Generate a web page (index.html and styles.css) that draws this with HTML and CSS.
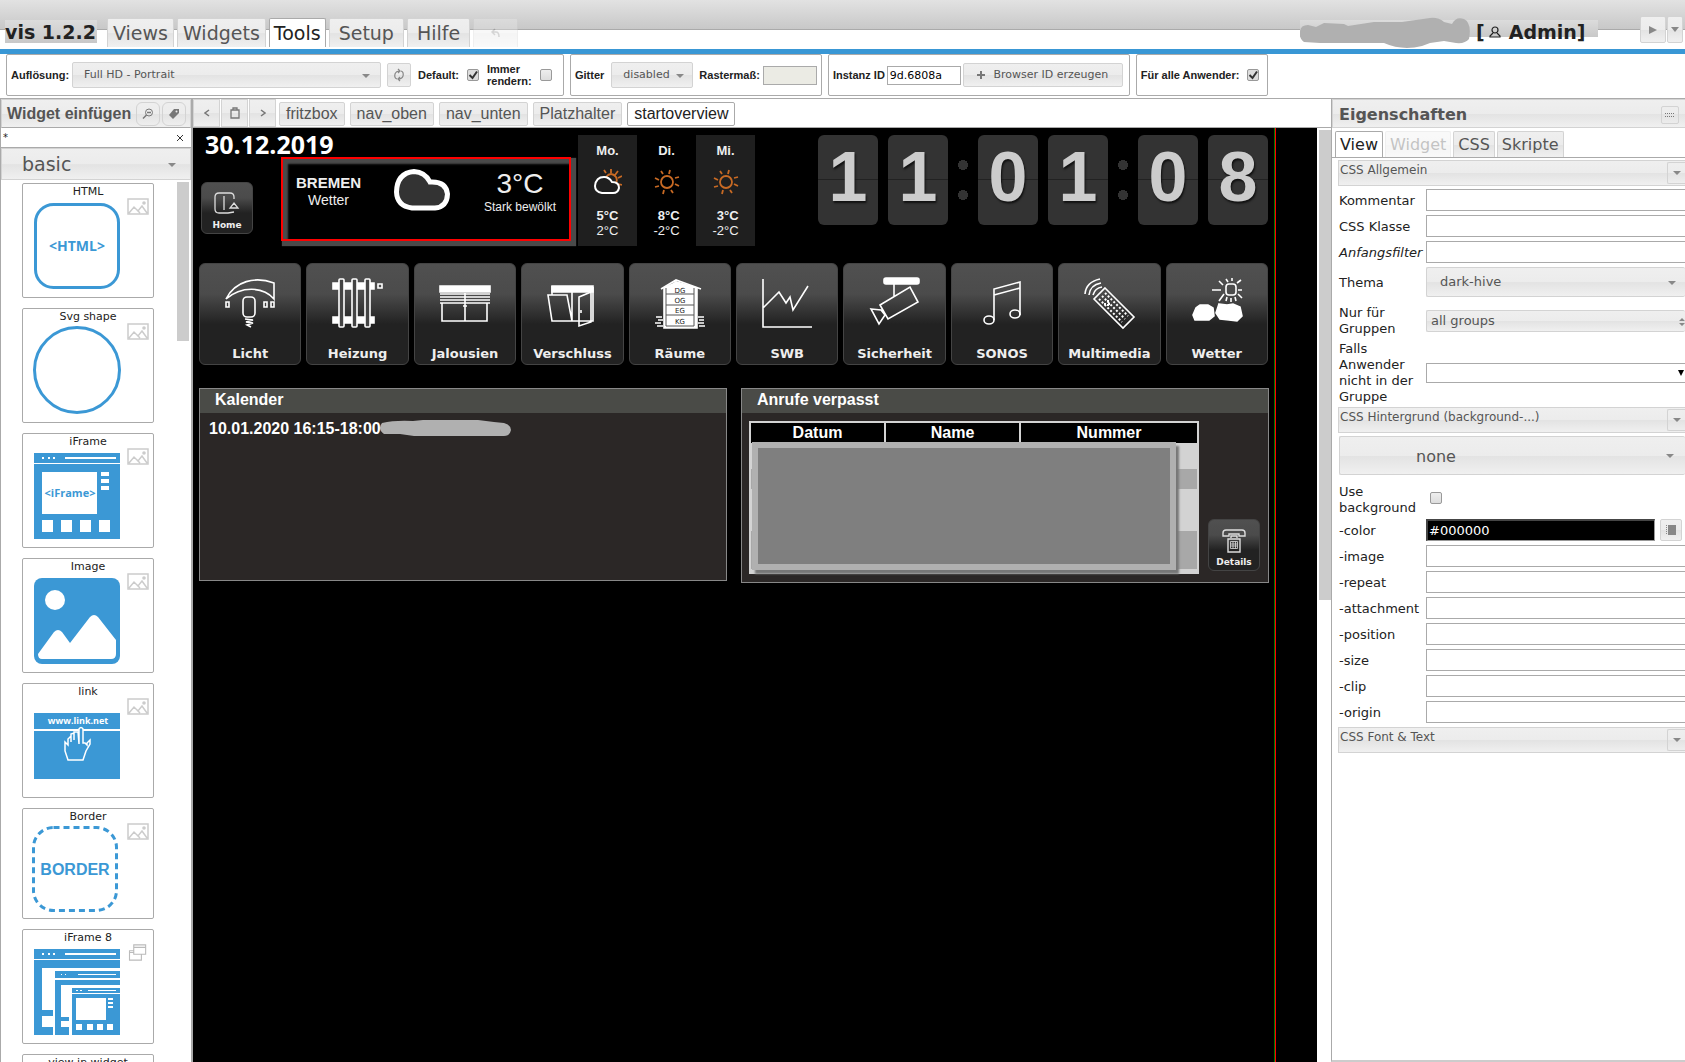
FILE: index.html
```html
<!DOCTYPE html>
<html lang="de">
<head>
<meta charset="utf-8">
<title>vis 1.2.2</title>
<link rel="stylesheet" href="styles.css">
</head>
<body>
<svg class="defs" aria-hidden="true">
  <symbol id="thumb" viewBox="0 0 22 17"><path d="M1 1h20v15H1zM2 15l5-6 4 4 4-5 5 7M10 12l3 3" fill="none" stroke="#ccc" stroke-width="1.5"/><circle cx="17" cy="5" r="1.8" fill="#ccc"/></symbol>
  <symbol id="sun" viewBox="0 0 26 26"><g fill="none" stroke="#c86a24" stroke-width="1.8"><circle cx="13" cy="13" r="6"/><path d="M16 1l-1 4M7 2l2 3M1 9l4 2M1 18l4-1M9 25l1-4M19 24l-2-3M25 17l-4-2M25 8l-4 1"/></g></symbol>
</svg>

<header class="top">
  <strong class="brand">vis 1.2.2</strong>
  <nav class="menu">
    <button>Views</button><button>Widgets</button><button class="active">Tools</button><button class="wide">Setup</button><button class="wide">Hilfe</button>
    <button class="undo" disabled aria-label="Undo"><svg width="10" height="10" viewBox="0 0 10 10"><path d="M4 1L1 4l3 3M1 4h4q3 0 3 5" fill="none" stroke="#888" stroke-width="1.5"/></svg></button>
  </nav>
  <div class="user">
    <svg class="scribble" width="170" height="32" viewBox="0 0 170 32"><path d="M0 18Q-1 8 8 8l8 2 8-4 20 1 4 2L74 5l28 0L130 1q8-1 14 4l8 2q4-8 12-5 8 4 5 20-4 5-13 4l-12-2-14 2-8 3q-20 5-38-3H20L4 25Q0 22 0 18" fill="#b0b0b0"/></svg>
    <span>[</span><svg width="12" height="12" viewBox="0 0 12 12"><path d="M6 1a2.500 2.500 0 0 1 0 6a2.500 2.500 0 0 1 0-6M4 7L1 10v1h10v-1L8 7" fill="none" stroke="#222" stroke-width="1.200"/></svg><span>Admin]</span>
  </div>
  <div class="run">
    <button aria-label="Start"><svg width="8" height="8" viewBox="0 0 8 8"><path d="M0 0l8 4-8 4z" fill="#888"/></svg></button><button class="slim" aria-label="Auswahl"><svg width="8" height="5" viewBox="0 0 8 5"><path d="M0 0h8L4 5z" fill="#888"/></svg></button>
  </div>
</header>

<section class="tools">
  <div class="group">
    <label for="res">Auflösung:</label>
    <select id="res" class="box resolution"><option>Full HD - Portrait</option></select>
    <button class="box square" aria-label="Aktualisieren"><svg width="12" height="14" viewBox="0 0 12 14"><path d="M4 11Q1 10 2 6q1-3 5-3M5 1l2 2-2 2M8 3q3 1 2 5-1 3-5 3M7 9l-2 2 2 2" fill="none" stroke="#888" stroke-width="1.200"/></svg></button>
    <label for="def">Default:</label><input id="def" type="checkbox" checked>
    <label for="imm" class="two">Immer rendern:</label><input id="imm" type="checkbox">
  </div>
  <div class="group">
    <label for="grid">Gitter</label>
    <select id="grid" class="box gridsel"><option>disabled</option></select>
    <label for="ras" class="tight">Rastermaß:</label><input id="ras" class="short" type="text" disabled>
  </div>
  <div class="group instance">
    <label for="inst">Instanz ID</label><input id="inst" type="text" value="9d.6808a">
    <button class="box create"><svg width="8" height="8" viewBox="0 0 8 8"><path d="M4 0v8M0 4h8" stroke="#777" stroke-width="2"/></svg>Browser ID erzeugen</button>
  </div>
  <div class="group">
    <label for="all">Für alle Anwender:</label><input id="all" type="checkbox" checked>
  </div>
</section>

<main>
  <aside class="palette">
    <div class="bar">
      <h2>Widget einfügen</h2>
      <button aria-label="Suche"><svg width="12" height="12" viewBox="0 0 12 12"><circle cx="7" cy="4.500" r="3.500" fill="none" stroke="#777"/><path d="M5 4.500h4M4.500 7L1 10.500" stroke="#777" stroke-width="1.500"/></svg></button>
      <button aria-label="Tags"><svg width="12" height="12" viewBox="0 0 12 12"><path d="M1 7l5-6h5v4L5 11z" fill="#777"/><circle cx="8.500" cy="3.500" r="1" fill="#eee"/></svg></button>
    </div>
    <div class="filter"><input type="text" value="*" aria-label="Filter"><button aria-label="Leeren"><svg width="8" height="8" viewBox="0 0 8 8"><path d="M1 1l6 6M7 1L1 7" stroke="#333"/></svg></button></div>
    <select class="set" aria-label="Widgetset"><option>basic</option></select>
    <div class="list">
      <div class="cards">
        <article><h3>HTML</h3><div class="pic"><svg class="art" viewBox="0 0 86 86"><rect x="1.500" y="1.500" width="83" height="83" rx="18" fill="none" stroke="#3b98d5" stroke-width="3"/><text x="43" y="48" text-anchor="middle" class="t-html">&lt;HTML&gt;</text></svg><svg class="th"><use href="#thumb"/></svg></div></article>
        <article><h3>Svg shape</h3><div class="pic"><svg class="art" viewBox="0 0 86 86"><circle cx="43" cy="42" r="42.500" fill="none" stroke="#3b98d5" stroke-width="3"/></svg><svg class="th"><use href="#thumb"/></svg></div></article>
        <article><h3>iFrame</h3><div class="pic"><svg class="art" viewBox="0 0 86 86"><path d="M0 0h86v10H0zM0 11h86v75H0z" fill="#3b98d5"/><path d="M8 4h2v2H8zM14 4h2v2h-2zM19 4h2v2h-2zM31 4h51v2H31zM8 19h55v42H8zM67 19h8v4h-8zM67 26h8v4h-8zM67 33h8v4h-8zM8 67h11v12H8zM27 67h11v12H27zM46 67h11v12H46zM65 67h11v12H65z" fill="#fff"/><text x="36" y="44" text-anchor="middle" class="t-frame">&lt;iFrame&gt;</text></svg><svg class="th"><use href="#thumb"/></svg></div></article>
        <article><h3>Image</h3><div class="pic"><svg class="art" viewBox="0 0 86 86"><rect width="86" height="86" rx="8" fill="#3b98d5"/><circle cx="21" cy="22" r="10" fill="#fff"/><path d="M4 76L20 54q4-4 8 0l8 11 20-26q4-4 8 0l18 23v14q0 5-5 5H8q-4 0-4-5" fill="#fff"/></svg><svg class="th"><use href="#thumb"/></svg></div></article>
        <article><h3>link</h3><div class="pic"><svg class="art" viewBox="0 0 86 86"><path d="M0 10h86v16H0zM0 28h86v48H0z" fill="#3b98d5"/><text x="44" y="21" text-anchor="middle" class="t-link">www.link.net</text><path d="M45 41V26q2-3 4 0v14h2l2 2v-2l3-3v4l-4 7-1 3-2 6H34l-3-9v-9l3 3v-6l3-3v6-8l3-1v7-8h4z" fill="#3b98d5" stroke="#fff" stroke-width="1.500"/></svg><svg class="th"><use href="#thumb"/></svg></div></article>
        <article class="border"><h3>Border</h3><div class="pic"><svg class="art" viewBox="0 0 86 86"><rect x="1.500" y="1.500" width="83" height="83" rx="20" fill="none" stroke="#3b98d5" stroke-width="3" stroke-dasharray="6 4"/><text x="43" y="49" text-anchor="middle" class="t-border">BORDER</text></svg><svg class="th"><use href="#thumb"/></svg></div></article>
        <article><h3>iFrame 8</h3><div class="pic"><svg class="art" viewBox="0 0 86 86"><path d="M0 0h86v10H0zM0 11h86v8H8v42h11v6H8v11h11v8H0zM21 22h65v7H21zM21 31h65v5H27v32h8v4h-8v6h8v8H21zM38 39h48v5H38zM38 45h48v41H38z" fill="#3b98d5"/><path d="M8 4h2v2H8zM14 4h2v2h-2zM19 4h2v2h-2zM31 4h51v2H31zM27 25h1v1h-1zM31 25h1v1h-1zM44 25h38v1H44zM54 41h28v1H54zM42 41h2v1h-2zM46 41h2v1h-2zM42 49h30v22H42zM74 49h5v2h-5zM74 53h5v2h-5zM74 57h5v2h-5zM42 75h6v6h-6zM53 75h6v6h-6zM63 75h6v6h-6zM73 75h6v6h-6z" fill="#fff"/></svg><svg class="th" viewBox="0 0 22 20"><path d="M6 1h14v11H6zM6 4h14M6 8H1v11h14v-7M1 10h5" fill="none" stroke="#bbb" stroke-width="1.300"/></svg></div></article>
        <article><h3>view in widget</h3></article>
      </div>
      <div class="thumbbar"></div>
    </div>
  </aside>

  <section class="stage">
    <nav class="views">
      <button class="nav" aria-label="Zurück"><svg width="6" height="8" viewBox="0 0 6 8"><path d="M5 1L1 4l4 3" fill="none" stroke="#777" stroke-width="1.500"/></svg></button><button class="nav" aria-label="Zwischenablage"><svg width="10" height="12" viewBox="0 0 10 12"><path d="M1 3h8v8H1zM3 3V1h4v2" fill="none" stroke="#777" stroke-width="1.300"/></svg></button><button class="nav" aria-label="Weiter"><svg width="6" height="8" viewBox="0 0 6 8"><path d="M1 1l4 3-4 3" fill="none" stroke="#777" stroke-width="1.500"/></svg></button>
      <button>fritzbox</button><button>nav_oben</button><button>nav_unten</button><button>Platzhalter</button><button class="active">startoverview</button>
    </nav>
    <div class="scroller">
      <div class="canvas">
        <div class="view">
          <div class="head">
            <div class="left">
              <div class="date">30.12.2019</div>
              <div class="now">
                <button class="mini"><svg width="26" height="24" viewBox="0 0 26 24"><path d="M20 7V5q0-4-4-4H5Q1 1 1 5v12q0 4 4 4h9l6-1M10 4v14M16 16h8l-4-5z" fill="none" stroke="#ddd" stroke-width="1.300"/></svg>Home</button>
                <div class="weather">
                  <div><b class="city">BREMEN</b><span>Wetter</span></div>
                  <svg width="56" height="42" viewBox="0 0 56 42"><path d="M18 39Q3 37 2.500 23Q3 4 20 2.500Q31 3 36 13Q52 12 53.500 25Q53 38 41 39z" fill="#333" stroke="#fff" stroke-width="5"/></svg>
                  <div><span class="temp">3°C</span><span class="cond">Stark bewölkt</span></div>
                </div>
              </div>
            </div>
            <div class="forecast">
              <div class="day"><b>Mo.</b><svg width="28" height="26" viewBox="0 0 28 26"><g fill="none" stroke="#c86a24" stroke-width="1.800"><path d="M12 8q5-6 10 0 2 4-1 8M17 0v4M10 1l2 3M24 2l-3 4M28 7l-4 2M28 16l-4-1"/></g><path d="M8 24Q1 23 1 17q1-9 9-9 5 0 8 5 7 0 7 6-1 5-6 5z" fill="#1f1f1f" stroke="#fff" stroke-width="2"/></svg><p><b>5°C</b><br>2°C</p></div>
              <div class="day"><b>Di.</b><svg width="26" height="26"><use href="#sun"/></svg><p><b>8°C</b><br>-2°C</p></div>
              <div class="day"><b>Mi.</b><svg width="26" height="26"><use href="#sun"/></svg><p><b>3°C</b><br>-2°C</p></div>
            </div>
            <div class="clock"><span>1</span><span>1</span><i></i><span>0</span><span>1</span><i></i><span>0</span><span>8</span></div>
          </div>

          <div class="tiles">
            <button><svg viewBox="0 0 50 50"><path d="M1 21C10 3 30-2 49 5v16C38 8 16 8 1 21zM1 24h3v5H1zM39 24h3v5h-3zM46 24h3v5h-3z"/><rect x="18" y="19" width="12" height="20" rx="4"/><path d="M20 41l8 1-7 2 7 1-6 2 4 2"/></svg>Licht</button>
            <button><svg viewBox="0 0 50 50"><path class="f" d="M0 5h41v6H0zM0 39h41v6H0z"/><g class="d"><rect x="6" y="1" width="5" height="48" rx="1"/><rect x="19" y="1" width="5" height="48" rx="1"/><rect x="32" y="1" width="5" height="48" rx="1"/></g><path d="M45 6h4v4h-4z"/></svg>Heizung</button>
            <button><svg viewBox="0 0 50 50"><path class="f" d="M0 8h50v6H0z"/><path d="M0 16h50M0 19h50M0 22h50M0 25h50M2 25v18h45V25M25 15v28M23 28h4"/></svg>Jalousien</button>
            <button><svg viewBox="0 0 50 50"><path class="f" d="M5 8h41v6H5z"/><path d="M5 8v9M5 43h41V9M25 12v31M1 17h19l5 26H5zM32 19l12-5v30l-12 4zM34 32v3"/></svg>Verschluss</button>
            <button><svg viewBox="0 0 50 50"><path d="M6 11L21 2l25 9M18 4h4"/><path class="f" d="M9 10L22 4l20 6v40H9z"/><path d="M1 39h6M3 42h5M0 45h6M2 48h6M43 39h6M44 42h5M43 45h6M44 48h6"/><path d="M11 16h28M11 27h28M11 37h28M11 48h28M11 10v38M39 10v38" class="k"/><g class="fl"><text x="25" y="15">DG</text><text x="25" y="25">OG</text><text x="25" y="35">EG</text><text x="25" y="46">KG</text></g></svg>Räume</button>
            <button><svg viewBox="0 0 50 50"><path d="M1 1v48h49M1 30l16-16 7 11 4-6 3 13L46 8"/></svg>SWB</button>
            <button><svg viewBox="0 0 50 50"><rect class="f" x="14" width="35" height="6" rx="2"/><path d="M24 6v13M10 27L40 9l8 15-30 17zM1 31l10 1 4 5-6 9z"/></svg>Sicherheit</button>
            <button><svg viewBox="0 0 50 50"><path d="M17 42V11l26-7v33M17 17l26-7"/><ellipse cx="12" cy="42" rx="5" ry="4"/><ellipse cx="38" cy="36" rx="5" ry="4"/></svg>SONOS</button>
            <button><svg viewBox="0 0 50 50"><path d="M21 10l29 29-11 11-29-29zM1 16Q2 4 16 1M5 17Q6 7 17 5M9 17q2-7 9-8"/><path class="dots" d="M21 15l23 23M18 18l23 23M15 21l23 23M20 26h8M24 22v8"/></svg>Multimedia</button>
            <button><svg viewBox="0 0 50 50"><rect x="34" y="6" width="10" height="11" rx="3"/><path d="M20 12h9M34 1l2 3M27 3l4 4M40 0v3M45 5l4-3M46 12h4M46 16l4 4M27 23l5-7M34 23l1-4M39 24v-4M44 23l-1-4"/><path class="f" d="M4 30l4-3h8l5 3 1 8-5 4H3l-2-5zM27 26l8 1 6-1 7 3 2 9-5 5-8-1-9-1-4-6z"/></svg>Wetter</button>
          </div>

          <div class="panels">
            <section class="panel"><h2>Kalender</h2><p class="entry">10.01.2020 16:15-18:00<svg width="132" height="16" viewBox="0 0 132 16"><path d="M3 3Q16 0 34 1L44 0h55l16 2 10 1q7 2 7 7-1 6-7 6H35L21 14H5Q-2 9 3 3" fill="#b0b0b0"/></svg></p></section>
            <section class="panel calls"><h2>Anrufe verpasst</h2>
              <div class="callbody">
                <div class="calltable">
                  <table><thead><tr><th class="c1">Datum</th><th class="c1">Name</th><th>Nummer</th></tr></thead>
                  <tbody><tr class="r1"><td colspan="3"></td></tr><tr class="r2 odd"><td colspan="3"></td></tr><tr class="r3"><td colspan="3"></td></tr><tr class="r4 odd"><td colspan="3"></td></tr></tbody></table>
                  <div class="cover"></div>
                </div>
                <button class="mini"><svg width="26" height="26" viewBox="0 0 26 26"><path d="M2 8V5q0-3 3-3h16q3 0 3 3v3h-6V6H8v2zM10 10V8h6v2M7 11h12v13H7z" fill="none" stroke="#ddd" stroke-width="1.400"/><path d="M9.500 13.500h7v7h-7zM9.500 16h7M9.500 18h7M12 13.500v7M14.500 13.500v7" fill="none" stroke="#ddd" stroke-width=".8"/></svg>Details</button>
              </div>
            </section>
          </div>
        </div>
      </div>
      <div class="rail"></div>
    </div>
  </section>

  <aside class="props">
    <div class="bar"><h2>Eigenschaften</h2><button aria-label="Ansicht"><svg width="10" height="4" viewBox="0 0 10 4"><path d="M0 .5h10M0 3.500h10" stroke="#777" stroke-dasharray="1 1"/></svg></button></div>
    <nav class="tabs"><button class="active">View</button><button disabled>Widget</button><button>CSS</button><button>Skripte</button></nav>
    <div class="fields">
      <h3>CSS Allgemein<button aria-label="Einklappen"><svg width="8" height="4" viewBox="0 0 8 4"><path d="M0 0h8L4 4z" fill="#888"/></svg></button></h3>
      <div class="row"><label for="p1">Kommentar</label><input id="p1" type="text"></div>
      <div class="row"><label for="p2">CSS Klasse</label><input id="p2" type="text"></div>
      <div class="row"><label for="p3"><em>Anfangsfilter</em></label><input id="p3" type="text"></div>
      <div class="row theme"><label for="p4">Thema</label><select id="p4" class="box"><option>dark-hive</option></select></div>
      <div class="row groups"><label for="p5">Nur für Gruppen</label><select id="p5" class="box updown"><option>all groups</option></select></div>
      <div class="row else"><label for="p6">Falls Anwender nicht in der Gruppe</label><select id="p6" class="plain"><option></option></select></div>
      <h3>CSS Hintergrund (background-...)<button aria-label="Einklappen"><svg width="8" height="4" viewBox="0 0 8 4"><path d="M0 0h8L4 4z" fill="#888"/></svg></button></h3>
      <select class="box none" aria-label="Hintergrund"><option>none</option></select>
      <div class="row use"><label for="p7">Use background</label><input id="p7" type="checkbox"></div>
      <div class="row"><label for="p8">-color</label><input id="p8" class="color" type="text" value="#000000"><button class="box pick" aria-label="Farbe wählen"><svg width="10" height="10" viewBox="0 0 10 10"><path d="M2 0h8v10H2z" fill="#888"/><path d="M.5 0v10" stroke="#888" stroke-dasharray="1 1"/></svg></button></div>
      <div class="row"><label for="p9">-image</label><input id="p9" type="text"></div>
      <div class="row"><label for="p10">-repeat</label><input id="p10" type="text"></div>
      <div class="row"><label for="p11">-attachment</label><input id="p11" type="text"></div>
      <div class="row"><label for="p12">-position</label><input id="p12" type="text"></div>
      <div class="row"><label for="p13">-size</label><input id="p13" type="text"></div>
      <div class="row"><label for="p14">-clip</label><input id="p14" type="text"></div>
      <div class="row"><label for="p15">-origin</label><input id="p15" type="text"></div>
      <h3>CSS Font &amp; Text<button aria-label="Einklappen"><svg width="8" height="4" viewBox="0 0 8 4"><path d="M0 0h8L4 4z" fill="#888"/></svg></button></h3>
    </div>
  </aside>
</main>
</body>
</html>
```
FILE: styles.css
```css
:root {
  --ui: "DejaVu Sans", Verdana, sans-serif;
  --arial: "Liberation Sans", Arial, sans-serif;
  --gloss: linear-gradient(#efefef 0, #ececec 50%, #e3e3e3 52%, #f0f0f0 100%);
  --tri: url("data:image/svg+xml,%3Csvg xmlns='http://www.w3.org/2000/svg' width='8' height='4'%3E%3Cpath d='M0 0h8L4 4z' fill='%23888'/%3E%3C/svg%3E");
}
* { box-sizing: border-box; }
body {
  margin: 0; height: 100vh; overflow: hidden; background: #fff; color: #222;
  display: flex; flex-direction: column; font-family: var(--ui); font-size: 13px;
}
h2, h3, p { margin: 0; }
button, input, select { font: inherit; color: inherit; margin: 0; border-radius: 0; }
button { padding: 0; background: none; border: 0; display: flex; align-items: center; justify-content: center; }
select { appearance: none; }
svg { flex: none; }
.defs { display: none; }

/* header */
.top {
  display: flex; align-items: flex-start; height: 54px; flex: none; padding: 18px 2px 0 5px;
  border-bottom: 5px solid #3997d5; font-size: 19px;
  background: linear-gradient(#e2e2e2, #c8c8c8) 0 0 / 100% 29px no-repeat, linear-gradient(#aaa, #aaa) 0 29px / 100% 1px no-repeat;
}
.brand { width: 92px; height: 23px; margin-top: 2px; line-height: 25px; background: linear-gradient(#dcdcdc, #c8c8c8); white-space: nowrap; }
.menu { display: flex; gap: 3px; margin-left: 10px; }
.menu button { height: 29px; padding: 0 5px; background: var(--gloss); border: 1px solid #d3d3d3; border-bottom: 0; border-radius: 2px 2px 0 0; color: #555; }
.menu .active { background: #fff; border-color: #aaa; color: #222; padding: 0 4px; }
.menu .wide { padding: 0 9px; }
.menu .undo { width: 45px; opacity: .35; }
.user {
  display: flex; align-items: flex-start; margin: 2px 42px 0 auto; width: 298px; height: 17px; gap: 4px;
  font-weight: bold; line-height: 24px; background: linear-gradient(#dcdcdc, #c8c8c8);
}
.user svg + span { margin-left: 4px; }
.user > svg { margin-top: 6px; }
.user .scribble { margin-top: -3px; }
.user .scribble + span { margin-left: 2px; }
.run { display: flex; gap: 1px; }
.run button { width: 26px; height: 27px; margin-top: -2px; border: 1px solid #d3d3d3; background: var(--gloss); border-radius: 2px; }
.run .slim { width: 16px; }

/* toolbar */
.tools { display: flex; flex: none; gap: 6px; padding: 0 6px 2px; height: 45px; border-bottom: 1px solid #aaa; font: bold 11px/12px var(--arial); }
.group { display: flex; align-items: center; border: 1px solid #aaa; border-radius: 2px; padding: 0 11px 0 4px; }
.group:nth-child(2) { padding-right: 4px; }
.group:nth-child(4) { padding-right: 8px; }
.group.instance { padding-right: 6px; }
.box { border: 1px solid #d3d3d3; border-radius: 2px; background: var(--gloss); color: #555; font-family: var(--ui); font-weight: normal; }
select.box, select.set { background: var(--tri) no-repeat, var(--gloss); }
.resolution, .gridsel { height: 26px; padding: 0 11px; margin-left: 3px; }
.group .resolution { width: 309px; background-position: right 10px top 11px, 0 0; }
.group .gridsel { width: 82px; margin: 0 6px 0 7px; background-position: right 8px top 11px, 0 0; }
.square { width: 24px; height: 24px; margin: 0 7px 0 6px; }
.two { width: 45px; margin: 0 8px; }
input[type=checkbox] {
  appearance: none; width: 12px; height: 12px; border: 1px solid #999; border-radius: 2px; flex: none;
  background: linear-gradient(#eee, #ddd);
}
.group > label:not(.two) + input[type=checkbox] { margin-left: 8px; }
input[type=checkbox]:checked { background: url("data:image/svg+xml,%3Csvg xmlns='http://www.w3.org/2000/svg' width='10' height='10'%3E%3Cpath d='M1.5 5l3 3L9 1.500' fill='none' stroke='%23333' stroke-width='2'/%3E%3C/svg%3E") #ddd; }
.group input[type=text] { width: 74px; height: 19px; border: 1px solid #aaa; padding: 0 2px; margin-left: 2px; font: 11px var(--ui); color: #000; }
.group input.short[type=text] { width: 54px; margin-left: 3px; background: #ebebe4; }
.create { width: 160px; height: 24px; margin-left: 2px; gap: 8px; font-size: 11px; }

main { flex: 1; min-height: 0; display: grid; grid-template-columns: 193px minmax(0, 1fr) 354px; }
.bar { display: flex; align-items: center; height: 29px; border: 1px solid #d3d3d3; border-bottom-color: #aaa; background: var(--gloss); color: #555; }
.bar h2 { font-size: 16px; }

/* widget palette */
.palette { display: flex; flex-direction: column; min-height: 0; border: solid #aaa; border-width: 0 2px 0 1px; }
.palette .bar { gap: 2px; padding-left: 5px; }
.palette h2 { font-family: var(--arial); width: 127px; white-space: nowrap; }
.palette .bar button { width: 24px; height: 24px; border: 1px solid #d3d3d3; border-radius: 6px; }
.filter { display: flex; height: 20px; border-bottom: 1px solid #aaa; }
.filter input { flex: 1; min-width: 0; border: 0; padding: 0 2px; font-size: 10px; outline: 0; }
.filter button { width: 22px; }
.set { height: 32px; flex: none; border: 1px solid #d3d3d3; padding: 0 20px; font-size: 19px; color: #555; }
select.set { background-position: right 14px top 14px, 0 0; }
.list { display: flex; flex: 1; min-height: 0; overflow: hidden; padding: 2px 2px 0 21px; }
.cards { display: flex; flex-direction: column; gap: 10px; width: 132px; padding-top: 1px; }
.cards article { flex: none; height: 115px; border: 1px solid #aaa; border-radius: 2px; }
.cards .border { height: 111px; }
.cards h3 { font-size: 11px; font-weight: normal; text-align: center; height: 14px; line-height: 16px; }
.pic { display: flex; gap: 7px; padding: 0 0 0 11px; }
.art { width: 86px; height: 86px; margin-top: 5px; overflow: visible; }
.border .art { margin: 3px 2px 0 -2px; }
.th { width: 22px; height: 17px; }
.t-html, .t-frame, .t-border { font: bold 14px "Open Sans", sans-serif; fill: #3b98d5; }
.t-frame { font-size: 11px; }
.t-border { font: bold 16px var(--arial); }
.t-link { font: bold 9px "Open Sans", sans-serif; fill: #fff; }
.thumbbar { width: 12px; height: 159px; margin-left: auto; background: #ccc; }

/* view tabs */
.stage { display: flex; flex-direction: column; min-width: 0; min-height: 0; }
.views { display: flex; gap: 5px; height: 29px; flex: none; border-bottom: 1px solid #aaa; align-items: flex-end; font: 16px var(--arial); }
.views button { height: 24px; padding: 0 6px; margin-bottom: 1px; border: 1px solid #d3d3d3; border-radius: 2px; background: var(--gloss); color: #555; }
.views .nav { width: 27px; height: 28px; margin: 0 -4px 0 0; border-radius: 0; }
.views .nav + button:not(.nav) { margin-left: 2px; }
.views .active { background: #fff; border-color: #aaa; color: #222; }
.scroller { display: flex; flex: 1; min-height: 0; }
.canvas { flex: 1; min-width: 0; background: #000; color: #eee; padding-right: 41px; }
.view { height: 100%; padding: 0 6px; border-right: 1px solid #f00; box-shadow: inset -1px 0 #070; }
.rail { width: 14px; margin-top: 2px; background: linear-gradient(#ccc, #ccc) 2px 0 / 12px 470px no-repeat; }

/* dashboard */
.head { display: flex; height: 118px; font-family: var(--arial); }
.date { height: 29px; padding-left: 6px; font: bold 25px/32px "Open Sans", sans-serif; color: #fff; }
.now { display: flex; gap: 28px; padding-left: 2px; }
.mini, .tiles button {
  flex-direction: column; border: 1px solid #444; border-radius: 6px; color: #eee; font-weight: bold; font-family: var(--ui);
  background: linear-gradient(#505050 0, #4b4b4b 30%, #222 60%, #222 100%);
}
.mini { width: 52px; height: 52px; flex: none; font-size: 9px; justify-content: flex-end; gap: 4px; padding-bottom: 3px; }
.now .mini { margin-top: 25px; }
.weather {
  width: 290px; height: 84px; border: 2px solid #f00; display: flex; align-items: flex-start; justify-content: space-between;
  padding: 10px 13px; text-align: center; font-size: 14px; line-height: 16px;
  box-shadow: inset 5px 5px 2px #4a4a4a, 3px 3px 1px 2px #4a4a4a;
}
.weather span, .weather b { display: block; }
.weather .city { font-size: 15px; line-height: 18px; margin-top: 5px; }
.weather .temp { font-size: 28px; line-height: 30px; }
.weather .cond { font-size: 12px; }
.forecast { display: flex; margin: 7px 0 0 7px; font-size: 13px; }
.day { width: 59px; display: flex; flex-direction: column; align-items: center; padding-top: 8px; line-height: 15px; }
.day:nth-child(odd) { background: #1f1f1f; }
.day svg { margin: 11px 0 13px; }
.day p { text-align: right; }
.clock { display: flex; gap: 10px; margin: 7px 1px 0 auto; }
.clock span {
  width: 60px; height: 90px; border-radius: 6px; text-align: center; color: #ccc; font: bold 70px/84px var(--arial); text-shadow: 1px 2px 2px #111;
  background: linear-gradient(#222, #222) 0 44px / 100% 1px no-repeat #333;
}
.clock i { width: 10px; height: 90px; background: radial-gradient(circle, #333 5px, transparent 5px) 0 25px / 10px 10px no-repeat, radial-gradient(circle, #333 5px, transparent 5px) 0 55px / 10px 10px no-repeat; }
.tiles { display: grid; grid-template-columns: repeat(10, minmax(0, 1fr)); gap: 5px; margin: 17px 1px 0 0; }
.tiles button { height: 102px; font-size: 13px; justify-content: flex-end; gap: 18px; padding-bottom: 3px; line-height: 15px; }
.tiles svg { width: 50px; height: 50px; fill: none; stroke: #fff; stroke-width: 1.6; overflow: visible; }
.tiles .f { fill: #fff; }
.tiles .d { fill: #444; }
.tiles .k { stroke: #555; stroke-width: 1; }
.tiles .dots { stroke-width: 2; stroke-dasharray: 2 2; }
.fl { font: 7px var(--ui); fill: #222; stroke: none; text-anchor: middle; }
.panels { display: grid; grid-template-columns: 1fr 1fr; gap: 14px; align-items: start; margin-top: 23px; font: bold 16px var(--arial); color: #fff; }
.panel { border: 1px solid #888; background: #2b2726; height: 193px; }
.panel.calls { height: 195px; }
.panel h2 { font-size: 16px; line-height: 22px; height: 24px; padding-left: 15px; background: #4a4b47; }
.entry { display: flex; padding: 7px 9px; line-height: 18px; }
.entry svg { margin-left: -2px; }
.callbody { display: flex; justify-content: space-between; align-items: flex-end; padding: 8px 8px 0 7px; }
.calltable { display: grid; flex: none; width: 450px; background: #d3d3d3; height: 153px; }
.calltable > * { grid-area: 1 / 1; }
.calltable table { width: 100%; border-spacing: 2px 0; padding-top: 2px; table-layout: fixed; align-self: start; }
.calltable th { background: #000; height: 20px; padding: 0; line-height: 20px; }
.calltable .c1 { width: 133px; }
.calltable td { padding: 0; }
.odd td { background: #a8a8a8; }
.r1 { height: 26px; } .r2 { height: 20px; } .r3 { height: 42px; } .r4 { height: 38px; }
.cover { margin: 21px 23px 4px 3px; border: 6px solid #b0b0b0; background: #7f7f7f; box-shadow: 3px 4px 2px #777; }
.callbody .mini { margin-bottom: 3px; gap: 3px; }

/* properties */
.props { border-left: 1px solid #aaa; display: flex; flex-direction: column; min-width: 0; overflow: hidden; border-bottom: 2px solid #ccc; }
.props .bar { padding: 2px 6px 0; flex: none; border-right: 0; border-bottom-color: #d3d3d3; justify-content: space-between; }
.props .bar button { width: 18px; height: 18px; border: 1px solid #d3d3d3; border-radius: 2px; }
.tabs { display: flex; gap: 2px; padding: 3px 3px 0; height: 30px; flex: none; border-bottom: 1px solid #aaa; font-size: 16px; }
.tabs button { padding: 0 4px; border: 1px solid #d3d3d3; border-bottom: 0; border-radius: 2px 2px 0 0; background: var(--gloss); color: #555; }
.tabs .active { background: #fff; border-color: #aaa; color: #222; }
.tabs button:disabled { opacity: .35; }
.fields { padding: 2px 0 0 6px; }
.fields h3 { display: flex; justify-content: space-between; height: 26px; margin-bottom: 3px; padding: 1px 0 0 1px; border: 1px solid #d3d3d3; border-right: 0; background: var(--gloss); color: #555; font-size: 12px; font-weight: normal; line-height: 16px; }
.fields h3 button { width: 18px; height: 22px; border: 1px solid #d3d3d3; border-right: 0; border-radius: 2px 0 0 2px; }
.row { display: flex; align-items: center; margin-bottom: 4px; line-height: 16px; }
.row label { width: 88px; padding: 1px 4px 0 1px; flex: none; }
.row > input[type=text], .row select { flex: 1; min-width: 0; height: 22px; border: 1px solid #aaa; border-right: 0; }
.row select.box { border-color: #d3d3d3; padding: 0 4px; }
.row.theme { margin-bottom: 7px; }
.row.theme select { height: 30px; padding: 0 13px; background-position: right 9px top 13px, 0 0; }
.row.groups { margin-bottom: 3px; }
.row .updown { background-image: url("data:image/svg+xml,%3Csvg xmlns='http://www.w3.org/2000/svg' width='6' height='8'%3E%3Cpath d='M0 3h6L3 0zM0 5h6L3 8z' fill='%23888'/%3E%3C/svg%3E"), var(--gloss); background-position: right 0 top 7px, 0 0; }
.row.else { margin-bottom: 2px; }
.row.else select { height: 20px; background: url("data:image/svg+xml,%3Csvg xmlns='http://www.w3.org/2000/svg' width='6' height='6'%3E%3Cpath d='M0 0h6L3 6z'/%3E%3C/svg%3E") right 1px center no-repeat #fff; }
.none { display: block; width: calc(100% - 1px); height: 39px; margin: 0 0 8px 1px; padding: 2px 76px 0; font-size: 16px; border-right: 0; }
select.none { margin: 0 0 8px 1px; background-position: right 11px top 17px, 0 0; }
.row.use { margin-bottom: 3px; }
.row.use input { margin: 0 0 4px 4px; }
.row > input.color { border: 2px inset #999; border-width: 2px 1px 1px 2px; background: #000; color: #fff; padding: 0 1px; }
.pick { width: 22px; height: 22px; margin: 0 3px 0 5px; }
```
